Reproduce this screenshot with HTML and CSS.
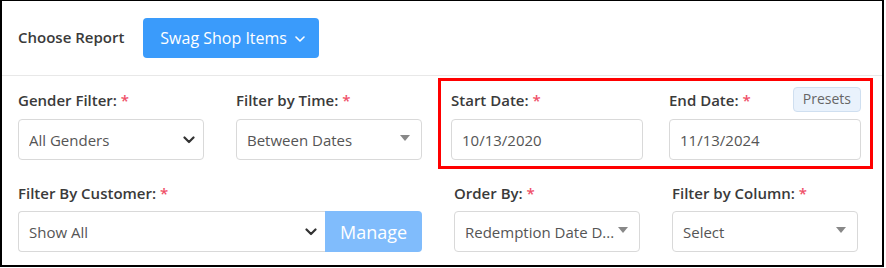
FILE: index.html
```html
<!DOCTYPE html>
<html>
<head>
<meta charset="utf-8">
<link rel="stylesheet" href="styles.css">
</head>
<body>
<div class="frame">
  <div class="header">
    <span class="choose">Choose Report</span>
    <button class="report-btn">Swag Shop Items
      <svg class="btn-chev" width="10" height="6" viewBox="0 0 10 6"><path d="M1 1l4 4 4-4" fill="none" stroke="#fff" stroke-width="1.6" stroke-linecap="round" stroke-linejoin="round"/></svg>
    </button>
  </div>

  <div class="row row1">
    <div class="field w186">
      <div class="label">Gender Filter: <span class="req">*</span></div>
      <div class="select">
        <span class="val">All Genders</span>
        <svg class="chev" width="12" height="8" viewBox="0 0 12 8"><path d="M1.5 1.5l4.5 4.5 4.5-4.5" fill="none" stroke="#333" stroke-width="2.2" stroke-linecap="round" stroke-linejoin="round"/></svg>
      </div>
    </div>
    <div class="field w186">
      <div class="label">Filter by Time: <span class="req">*</span></div>
      <div class="select">
        <span class="val">Between Dates</span>
        <span class="tri"></span>
      </div>
    </div>
    <div class="dates">
      <div class="field wdate">
        <div class="label">Start Date: <span class="req">*</span></div>
        <div class="select"><span class="val">10/13/2020</span></div>
      </div>
      <div class="field wdate">
        <div class="label label-split"><span>End Date: <span class="req">*</span></span><span class="presets">Presets</span></div>
        <div class="select"><span class="val">11/13/2024</span></div>
      </div>
    </div>
  </div>

  <div class="row row2">
    <div class="field wcust">
      <div class="label">Filter By Customer: <span class="req">*</span></div>
      <div class="group">
        <div class="select grow">
          <span class="val">Show All</span>
          <svg class="chev" width="12" height="8" viewBox="0 0 12 8"><path d="M1.5 1.5l4.5 4.5 4.5-4.5" fill="none" stroke="#333" stroke-width="2.2" stroke-linecap="round" stroke-linejoin="round"/></svg>
        </div>
        <div class="manage">Manage</div>
      </div>
    </div>
    <div class="field w186">
      <div class="label">Order By: <span class="req">*</span></div>
      <div class="select">
        <span class="val ellip">Redemption Date D...</span>
        <span class="tri"></span>
      </div>
    </div>
    <div class="field w186">
      <div class="label">Filter by Column: <span class="req">*</span></div>
      <div class="select">
        <span class="val">Select</span>
        <span class="tri"></span>
      </div>
    </div>
  </div>
</div>
</body>
</html>
```

FILE: styles.css
```css
html, body {
  margin: 0;
  padding: 0;
  background: #fff;
}
body {
  font-family: "Open Sans", "Noto Sans", sans-serif;
  color: #333;
}
.frame {
  box-sizing: border-box;
  width: 884px;
  height: 267px;
  border: 2px solid #000;
  border-top-width: 1px;
  overflow: hidden;
}
.header {
  display: flex;
  align-items: center;
  height: 75px;
  padding-left: 16px;
  border-bottom: 1px solid #e8e8e8;
  box-sizing: border-box;
}
.choose {
  font-size: 15px;
  font-weight: 600;
  color: #3a3a3a;
  margin-right: 19px;
  margin-top: -2px;
}
.report-btn {
  display: flex;
  align-items: center;
  gap: 8px;
  height: 40px;
  width: 176px;
  padding: 0 0 0 17px;
  box-sizing: border-box;
  background: #3a9bfb;
  border: none;
  border-radius: 4px;
  color: #fff;
  font-family: inherit;
  font-size: 16px;
}
.btn-chev { margin-top: 2px; }

.row {
  display: flex;
  align-items: flex-start;
  padding-left: 16px;
}
.row1 {
  margin-top: 2px;
  gap: 32px;
}
.row1 > .field { padding-top: 12px; }
.row1 .dates { margin-left: -16px; }
.row2 {
  margin-top: 14px;
  gap: 32px;
}
.field {
  display: flex;
  flex-direction: column;
}
.w186 { width: 186px; }
.wdate { width: 192px; }
.wcust { width: 404px; }
.label {
  font-size: 15px;
  font-weight: 600;
  color: #3a3a3a;
  line-height: 20px;
  height: 20px;
  margin-bottom: 9px;
  white-space: nowrap;
}
.row2 .label { margin-bottom: 8px; }
.req { color: #ef5068; font-weight: 600; }
.label-split {
  display: flex;
  justify-content: space-between;
  align-items: center;
}
.presets {
  box-sizing: border-box;
  height: 25px;
  padding: 0 9px;
  display: flex;
  align-items: center;
  font-size: 14px;
  font-weight: 400;
  color: #666;
  background: #e9f2fc;
  border: 1px solid #cfdff0;
  border-radius: 4px;
  margin-top: -2px;
  margin-right: 0;
}
.dates {
  display: flex;
  gap: 26px;
  border: 3px solid #ff0000;
  padding: 9px 9px 6px 10px;
}
.select {
  box-sizing: border-box;
  height: 41px;
  border: 1px solid #d9d9d9;
  border-radius: 4px;
  display: flex;
  align-items: center;
  padding: 0 12px 0 10px;
  font-size: 15px;
  color: #555;
  background: #fff;
}
.val {
  flex: 1;
  white-space: nowrap;
  overflow: hidden;
}
.chev { flex: none; margin-right: -4px; }
.tri {
  flex: none;
  width: 0;
  height: 0;
  border-left: 5px solid transparent;
  border-right: 5px solid transparent;
  border-top: 6px solid #888;
  margin-top: -3px;
  margin-right: -1px;
}
.group {
  display: flex;
}
.grow {
  flex: 1;
  border-top-right-radius: 0;
  border-bottom-right-radius: 0;
  border-right: none;
}
.manage {
  width: 97px;
  height: 41px;
  box-sizing: border-box;
  background: #80bcfc;
  color: #fff;
  font-size: 18px;
  display: flex;
  align-items: center;
  justify-content: center;
  border-radius: 0 4px 4px 0;
}
```
